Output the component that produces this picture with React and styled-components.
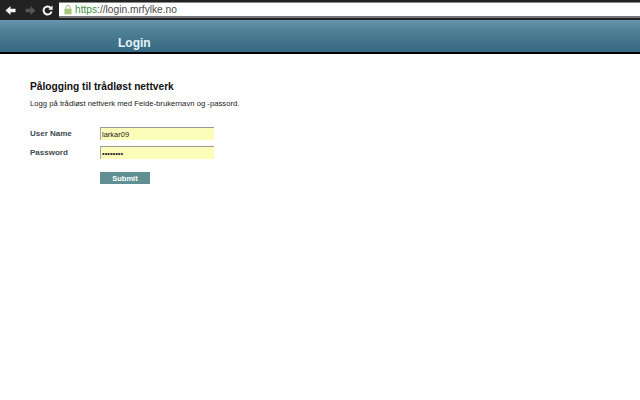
import React from 'react';
import styled, { createGlobalStyle } from 'styled-components';

const GlobalStyle = createGlobalStyle`
  html, body {
    margin: 0;
    padding: 0;
    background: #ffffff;
  }
  body {
    width: 640px;
    height: 400px;
    overflow: hidden;
    font-family: "Liberation Sans", Arial, sans-serif;
  }
`;

const App = () => {
  return (
    <Page>
      <GlobalStyle />

      {/* Browser chrome */}
      <BrowserBar>
        <NavIcon viewBox="0 0 12 12" $left={5}>
          <path d="M0.5 6 L6 1 V4 H11.5 V8 H6 V11 Z" fill="#f4f4f4" />
        </NavIcon>
        <NavIcon viewBox="0 0 12 12" $left={9}>
          <path d="M11.5 6 L6 1 V4 H0.5 V8 H6 V11 Z" fill="#555555" />
        </NavIcon>
        <NavIcon viewBox="0 0 12 12" $left={6}>
          <path d="M9.6 3.2 A4.4 4.4 0 1 0 10.4 7" fill="none" stroke="#f4f4f4" strokeWidth="2.2" />
          <path d="M6.8 4.9 L11.6 5.4 V0.6 Z" fill="#f4f4f4" />
        </NavIcon>
        <AddressBar>
          <LockIcon viewBox="0 0 10 12">
            <path d="M2.5 5 V3.4 A2.5 2.5 0 0 1 7.5 3.4 V5" fill="none" stroke="#a0a090" strokeWidth="1.2" />
            <rect x="0.5" y="5" width="9" height="7" fill="#a9c77c" />
          </LockIcon>
          <Url>
            <Scheme>https</Scheme>://login.mrfylke.no
          </Url>
        </AddressBar>
      </BrowserBar>

      {/* Site header */}
      <Banner>
        <BannerTitle>Login</BannerTitle>
      </Banner>

      {/* Login form */}
      <Content>
        <Heading>Pålogging til trådløst nettverk</Heading>
        <Intro>Logg på trådløst nettverk med Feide-brukernavn og -passord.</Intro>
        <Form>
          <Row>
            <Label>User Name</Label>
            <Input type="text" defaultValue="larkar09" />
          </Row>
          <Row>
            <Label>Password</Label>
            <Input type="password" defaultValue="larkar09" />
          </Row>
          <SubmitRow>
            <Submit type="button">Submit</Submit>
          </SubmitRow>
        </Form>
      </Content>
    </Page>
  );
};

const Page = styled.div`
  width: 640px;
  height: 400px;
  overflow: hidden;
  background: #ffffff;
`;

const BrowserBar = styled.div`
  height: 20px;
  display: flex;
  align-items: center;
  background: #222222;
`;

const NavIcon = styled.svg`
  width: 11px;
  height: 11px;
  margin-left: ${(props) => props.$left}px;
  flex-shrink: 0;
`;

const AddressBar = styled.div`
  flex: 1;
  height: 16px;
  margin: 2px 0 0 6px;
  align-self: flex-start;
  display: flex;
  align-items: center;
  padding-left: 5px;
  background: #ffffff;
  border-top: 1px solid #8a8a8a;
  border-bottom: 2px solid #77757a;
  box-sizing: border-box;
`;

const LockIcon = styled.svg`
  width: 8px;
  height: 11px;
  flex-shrink: 0;
`;

const Url = styled.span`
  margin-left: 3px;
  font-size: 10.2px;
  color: #4a4a4a;
`;

const Scheme = styled.span`
  color: #3f8f3f;
`;

const Banner = styled.div`
  height: 34px;
  display: flex;
  align-items: flex-end;
  padding-left: 118px;
  padding-bottom: 2px;
  box-sizing: border-box;
  background: linear-gradient(#6a94ae, #4f8299 30%, #3f7189 75%, #366a84);
  border-bottom: 2px solid #000000;
`;

const BannerTitle = styled.h1`
  margin: 0;
  font-size: 12px;
  line-height: 14px;
  font-weight: bold;
  color: #e6f4fa;
`;

const Content = styled.div`
  padding: 26px 0 0 30px;
`;

const Heading = styled.h2`
  margin: 0;
  font-size: 10.2px;
  line-height: 13px;
  font-weight: bold;
  color: #111111;
`;

const Intro = styled.p`
  margin: 6px 0 0;
  font-size: 7.7px;
  line-height: 10px;
  color: #222222;
`;

const Form = styled.form`
  margin-top: 18px;
  display: flex;
  flex-direction: column;
  gap: 6px;
`;

const Row = styled.div`
  display: flex;
  align-items: center;
  height: 13px;
`;

const Label = styled.label`
  width: 70px;
  font-size: 8px;
  font-weight: bold;
  color: #3d4a52;
`;

const Input = styled.input`
  width: 114px;
  height: 13px;
  padding: 0 0 0 1px;
  box-sizing: border-box;
  border: none;
  border-top: 1px solid #999999;
  border-left: 1px solid #aaaaaa;
  background: #fbfdb8;
  font-family: "Liberation Sans", Arial, sans-serif;
  font-size: 7.5px;
  color: #222222;
  outline: none;
`;

const SubmitRow = styled.div`
  margin-top: 7px;
  padding-left: 70px;
`;

const Submit = styled.button`
  display: block;
  width: 50px;
  height: 12px;
  padding: 0;
  border: none;
  background: #5f8f90;
  color: #ffffff;
  font-family: "Liberation Sans", Arial, sans-serif;
  font-size: 7.5px;
  font-weight: bold;
`;

export default App;
